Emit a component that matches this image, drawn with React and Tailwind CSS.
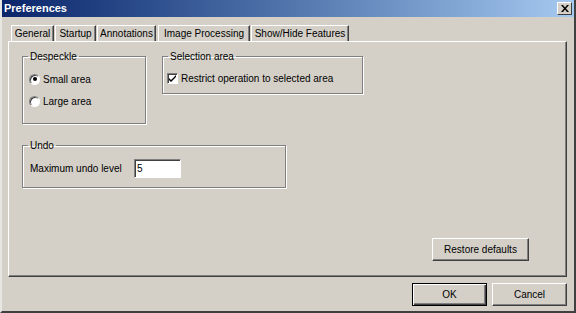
import React from "react";

const FONT = { fontFamily: '"Liberation Sans", Arial, sans-serif' };

const TABS = [
  { label: "General", w: "w-[43px]" },
  { label: "Startup", w: "w-[41px]" },
  { label: "Annotations", w: "w-[59px]" },
  { label: "Image Processing", w: "w-[92px]", active: true },
  { label: "Show/Hide Features", w: "w-[98px]" },
];

function Button({ children, className = "", isDefault = false }) {
  return (
    <button
      className={`h-[23px] bg-[#d4d0c8] text-[10px] text-black flex items-center justify-center ${
        isDefault
          ? "border border-black shadow-[inset_1px_1px_0_#fff,inset_-1px_-1px_0_#404040,inset_-2px_-2px_0_#808080]"
          : "border border-t-white border-l-white border-r-[#404040] border-b-[#404040] shadow-[inset_-1px_-1px_0_#808080]"
      } ${className}`}
    >
      {children}
    </button>
  );
}

function Radio({ checked, label }) {
  return (
    <div className="h-[16px] flex items-center gap-[3px]">
      <span className="w-[11px] h-[11px] rounded-full bg-white border border-t-[#808080] border-l-[#808080] border-r-white border-b-white shadow-[inset_1px_1px_0_#404040] flex items-center justify-center">
        {checked && <span className="w-[4px] h-[4px] rounded-full bg-black" />}
      </span>
      <span>{label}</span>
    </div>
  );
}

function Group({ title, className = "", children }) {
  return (
    <fieldset
      className={`border border-[#808080] shadow-[1px_1px_0_#fff,inset_1px_1px_0_#fff] ${className}`}
    >
      <legend className="ml-[5px] px-[2px] leading-[13px]">{title}</legend>
      {children}
    </fieldset>
  );
}

export default function App() {
  return (
    <div
      className="w-[576px] h-[313px] bg-[#d4d0c8] text-[10px] text-black flex flex-col border-l-2 border-l-[#e8e6e0] border-r-2 border-r-[#404040] border-b-2 border-b-[#404040] overflow-hidden whitespace-nowrap"
      style={FONT}
    >
      {/* Title bar */}
      <div className="h-[17px] -ml-[2px] -mr-[2px] bg-gradient-to-r from-[#0a246a] to-[#a6caf0] flex items-center justify-between pl-[4px] pr-[4px]">
        <span className="text-white font-bold text-[11px] leading-none">Preferences</span>
        <span className="w-[15px] h-[13px] bg-[#d4d0c8] border border-t-white border-l-white border-r-[#404040] border-b-[#404040] flex items-center justify-center">
          <svg width="8" height="7" viewBox="0 0 8 7">
            <path d="M0 0h2l2 2.5L6 0h2L5 3.5 8 7H6L4 4.5 2 7H0l3-3.5z" fill="#000" />
          </svg>
        </span>
      </div>

      {/* Tabs */}
      <div className="flex mt-[8px] ml-[9px] h-[16px] items-end">
        {TABS.map((t) => (
          <div
            key={t.label}
            className={`${t.w} h-[16px] flex items-center justify-center border-t border-l border-t-white border-l-white border-r border-r-[#404040] shadow-[inset_-1px_0_0_#808080] ${
              t.active ? "border-t-[#808080] border-l-[#808080] mx-[1px]" : "mr-[1px]"
            }`}
          >
            {t.label}
          </div>
        ))}
      </div>

      {/* Tab panel */}
      <div className="ml-[6px] mr-[7px] h-[236px] flex flex-col border border-t-white border-l-white border-r-[#404040] border-b-[#404040] shadow-[inset_-1px_-1px_0_#808080] pt-[8px] pl-[13px]">
        <div className="flex items-start gap-[16px]">
          <Group title="Despeckle" className="w-[124px] h-[74px]">
            <div className="flex flex-col gap-[6px] pt-[8px] pl-[6px]">
              <Radio checked label="Small area" />
              <Radio label="Large area" />
            </div>
          </Group>
          <Group title="Selection area" className="w-[201px] h-[44px]">
            <div className="h-[16px] mt-[7px] ml-[4px] flex items-center gap-[3px]">
              <span className="w-[11px] h-[11px] bg-white border border-t-[#808080] border-l-[#808080] border-r-white border-b-white shadow-[inset_1px_1px_0_#404040] flex items-center justify-center">
                <svg width="7" height="7" viewBox="0 0 7 7">
                  <path d="M0 3l2 2 5-5v2L2 7 0 5z" fill="#000" />
                </svg>
              </span>
              <span>Restrict operation to selected area</span>
            </div>
          </Group>
        </div>

        <Group title="Undo" className="w-[264px] h-[49px] mt-[15px]">
          <div className="mt-[7px] ml-[7px] flex items-center h-[19px]">
            <span className="w-[104px]">Maximum undo level</span>
            <div className="w-[47px] h-[19px] bg-white border border-t-[#808080] border-l-[#808080] border-r-white border-b-white shadow-[inset_1px_1px_0_#404040] flex items-center pl-[2px]">
              5
            </div>
          </div>
        </Group>

        <div className="mt-auto mb-[15px] mr-[37px] self-end">
          <Button className="w-[97px]">Restore defaults</Button>
        </div>
      </div>

      {/* Footer buttons */}
      <div className="flex justify-end gap-[5px] mt-[6px] mr-[7px]">
        <Button isDefault className="w-[75px]">OK</Button>
        <Button className="w-[75px]">Cancel</Button>
      </div>
    </div>
  );
}
